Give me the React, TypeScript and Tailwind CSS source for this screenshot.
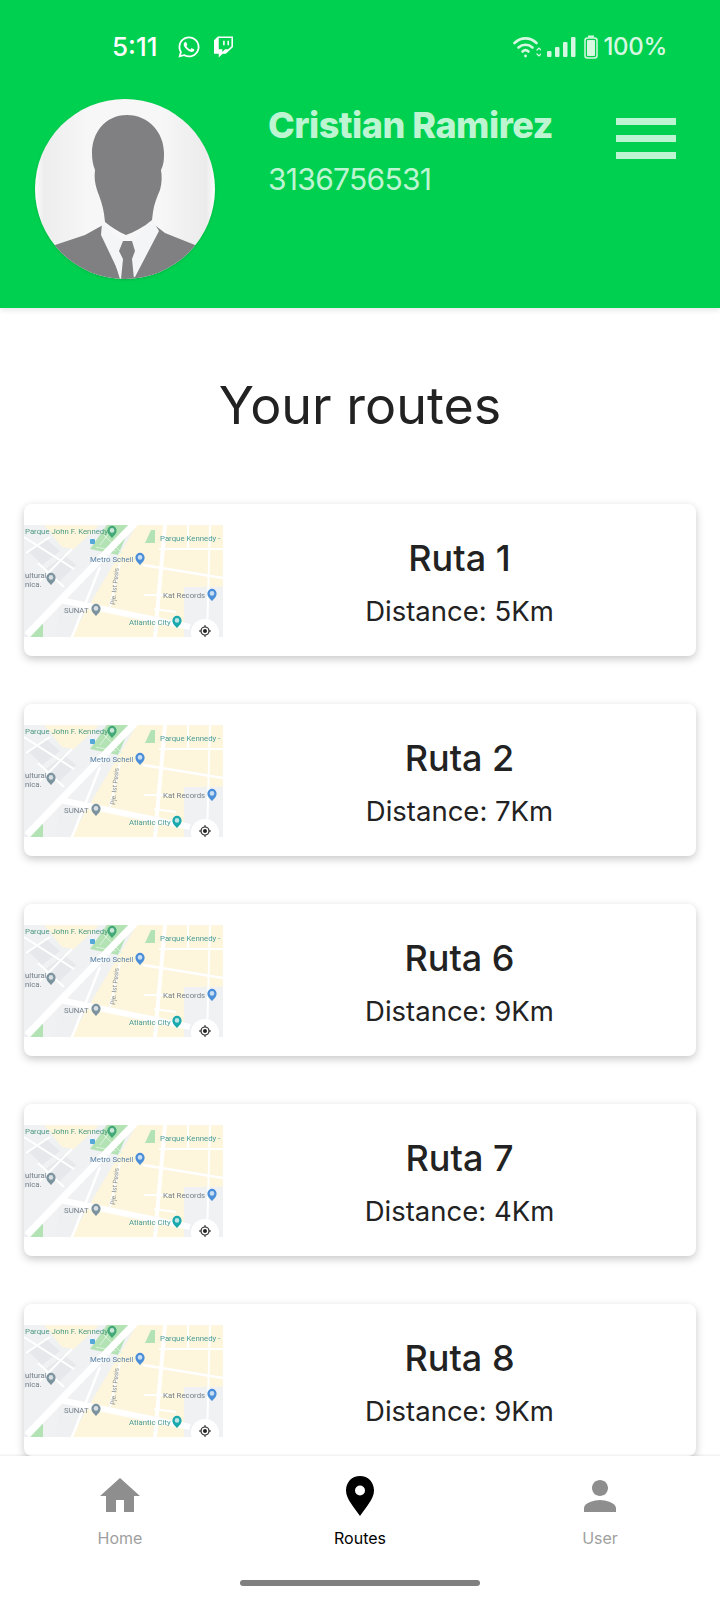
import { FaTwitch, FaWhatsapp } from "react-icons/fa";
import { MdHome, MdPerson } from "react-icons/md";

const routes = [
  { name: "Ruta 1", distance: "5Km" },
  { name: "Ruta 2", distance: "7Km" },
  { name: "Ruta 6", distance: "9Km" },
  { name: "Ruta 7", distance: "4Km" },
  { name: "Ruta 8", distance: "9Km" },
];

function MapPin({ x, y, color }: { x: number; y: number; color: string }) {
  return (
    <g transform={`translate(${x} ${y})`}>
      <path d="M0 7C-2 4.500-4.600 2.800-4.600-.6a4.600 4.600 0 0 1 9.200 0C4.600 2.800 2 4.500 0 7z" fill={color} />
      <circle cx="0" cy="-.6" r="2.300" fill="#fff" opacity=".7" />
    </g>
  );
}

function MapThumb() {
  return (
    <svg viewBox="0 0 199 112" className="mt-[2px] h-[112px] w-[199px] shrink-0 blur-[0.5px]">
      <rect width="199" height="112" fill="#f0f1f3" />
      {/* yellow blocks */}
      <path d="M46 112 113 0h86v62h-39v50z" fill="#fdf6dc" />
      <path d="M20 0h55L50 24 38 22z" fill="#fdf6dc" />
      <path d="M36 82 60 90 46 112H30z" fill="#eef0f2" />
      {/* grey blocks */}
      <path d="M4 26 22 14 36 26 18 40zM22 44 40 30 52 40 34 58zM0 46l8 8-8 10z" fill="#e6e8eb" />
      {/* park */}
      <path d="M66 24 94 30 107 0H83z" fill="#b3e2b4" />
      <path d="M72 22 92 26M80 10 98 28M88 4 76 20" stroke="#dcf2dc" strokeWidth="1" fill="none" />
      <path d="M121 18h10V5h-4z" fill="#b3e2b4" />
      <path d="M6 112h13V98z" fill="#b3e2b4" />
      {/* roads */}
      <g stroke="#fff" fill="none">
        <path d="M3 110 111-2" strokeWidth="7" />
        <path d="M141 0 131 112" strokeWidth="4" />
        <path d="M36 75 166 102" strokeWidth="6" />
        <path d="M119 40 199 53" strokeWidth="2.500" />
        <path d="M186 0 183 112" strokeWidth="2" />
        <path d="M135 24h64M164 0v24" strokeWidth="2" />
        <path d="M96 38 86 82" strokeWidth="2" />
        <path d="M76 42 48 112" strokeWidth="2.500" />
        <path d="M0 12 50 44M14 38 40 62M26 12 2 28M48 24 16 56M120 70h24M130 84l22 3" strokeWidth="2" />
      </g>
      {/* labels */}
      <g fontFamily="Roboto, sans-serif" fontSize="7.800">
        <text x="1" y="8.500" fill="#4e9a84">Parque John F. Kennedy</text>
        <text x="136" y="16" fill="#4a9c9a">Parque Kennedy -</text>
        <text x="66" y="37" fill="#5a84a8">Metro Schell</text>
        <text x="1" y="53" fill="#74808a">ultural</text>
        <text x="1" y="62" fill="#74808a">nica.</text>
        <text x="139" y="73" fill="#74808a">Kat Records</text>
        <text x="40" y="88" fill="#74808a">SUNAT</text>
        <text x="105" y="100" fill="#4a9c9a">Atlantic City</text>
        <text x="0" y="0" fill="#868e94" fontSize="6.500" transform="translate(91 80) rotate(-84)">Pje. Ist Pesis</text>
      </g>
      <MapPin x={88} y={6} color="#45a878" />
      <MapPin x={116} y={33} color="#4a8fd8" />
      <MapPin x={27} y={53} color="#7c939f" />
      <MapPin x={188} y={69} color="#4a8fd8" />
      <MapPin x={72} y={84} color="#7c939f" />
      <MapPin x={153} y={96} color="#1ba8ac" />
      <rect x="66" y="14" width="5" height="5" rx="1" fill="#55a9d8" />
      {/* my location button */}
      <circle cx="181" cy="108" r="14" fill="#fff" />
      <circle cx="181" cy="106" r="4" fill="none" stroke="#222" strokeWidth="1.200" />
      <circle cx="181" cy="106" r="2" fill="#222" />
      <path d="M181 100v2M181 110v2M175 106h2M185 106h2" stroke="#222" strokeWidth="1" />
    </svg>
  );
}

function Avatar() {
  return (
    <div className="h-[180px] w-[180px] shrink-0 overflow-hidden rounded-full shadow-sm">
      <svg viewBox="0 0 180 180" className="h-full w-full">
        <defs>
          <linearGradient id="wall" x1="0" x2="1" y1="0" y2="0">
            <stop offset="0" stopColor="#fdfdfd" />
            <stop offset=".05" stopColor="#ededed" />
            <stop offset=".3" stopColor="#f7f7f7" />
            <stop offset=".7" stopColor="#f7f7f7" />
            <stop offset=".95" stopColor="#ebebeb" />
            <stop offset="1" stopColor="#fdfdfd" />
          </linearGradient>
        </defs>
        <rect width="180" height="180" fill="url(#wall)" />
        {/* suit */}
        <path d="M20 146 50 136 68 126 85 180H98L117 124 130 134 160 146 170 180H10z" fill="#808083" />
        {/* shirt */}
        <path d="M67 124 92 146 118 122 124 132 100 178H86L66 136z" fill="#f4f5f6" />
        {/* tie */}
        <path d="M88 142h9l3 10-3 8 2 20H86l2-20-4-8z" fill="#808083" />
        {/* head */}
        <path d="M92 16C70 16 57 34 57 54c0 7 1 12 3 17-1 7 0 14 2 20 3 8 6 16 7 24l1 8c6 5 14 10 21 13 8-3 18-8 26-15l1-8c1-8 4-15 7-22 2-7 2-14 1-20 3-6 3-11 3-17 0-20-15-38-37-38z" fill="#808083" />
      </svg>
    </div>
  );
}

function StatusBar() {
  return (
    <div className="flex h-[24px] items-center justify-between pl-[112px] pr-[53px] text-white">
      <div className="flex items-center">
        <span className="w-[65px] text-[26px] font-medium leading-none">5:11</span>
        <FaWhatsapp className="h-[24px] w-[24px]" />
        <FaTwitch className="ml-[12px] h-[22px] w-[21px]" />
      </div>
      <div className="flex items-center text-[#d6f8e2]">
        <svg viewBox="0 0 28 24" className="h-[24px] w-[28px]" fill="none" stroke="currentColor" strokeWidth="2.600" strokeLinecap="round">
          <path d="M1.500 8C8 1.800 17 1.800 23.500 8" />
          <path d="M5.500 12.500C9.500 8.800 15.500 8.800 19.500 12.500" />
          <path d="M9.500 16.500c2-1.800 4-1.800 6 0" />
          <circle cx="12.500" cy="21" r="1.400" fill="currentColor" stroke="none" />
          <path d="M24 15l2-2 2 2M24 19l2 2 2-2" strokeWidth="1.200" />
        </svg>
        <svg viewBox="0 0 30 24" className="ml-[5px] h-[24px] w-[30px]" fill="currentColor">
          <rect x="1" y="16" width="4.500" height="6" rx="1" />
          <rect x="9" y="12" width="4.500" height="10" rx="1" />
          <rect x="17" y="7" width="4.500" height="15" rx="1" />
          <rect x="25" y="2" width="4.500" height="20" rx="1" />
        </svg>
        <svg viewBox="0 0 14 24" className="ml-[8px] h-[24px] w-[14px]" fill="none">
          <rect x="1" y="3" width="12" height="20" rx="2.500" stroke="currentColor" strokeWidth="1.500" />
          <rect x="4" y="0.500" width="6" height="2" fill="currentColor" />
          <rect x="3" y="5" width="8" height="16" rx="1" fill="currentColor" />
        </svg>
        <span className="ml-[5px] text-[24px] font-medium leading-none tracking-[-0.3px]">100%</span>
      </div>
    </div>
  );
}

function RouteCard({ name, distance }: { name: string; distance: string }) {
  return (
    <div className="flex h-[152px] shrink-0 items-center rounded-lg bg-white shadow-[0_3px_8px_rgba(0,0,0,0.22)]">
      <MapThumb />
      <div className="flex flex-1 flex-col items-center pt-[9px] text-[#222222]">
        <p className="text-[36px] font-medium leading-[44px]">{name}</p>
        <p className="mt-[9px] text-[27.500px] leading-[44px]">Distance: {distance}</p>
      </div>
    </div>
  );
}

export default function App() {
  return (
    <div className="flex h-[1600px] w-[720px] flex-col overflow-hidden bg-white font-['Inter',sans-serif]">
      {/* Header */}

      <header className="z-10 h-[308px] shrink-0 bg-[#00d04f] pt-[35px] shadow-[0_2px_6px_rgba(0,0,0,0.1)]">
        <StatusBar />

        <div className="mt-[40px] flex items-start pl-[35px] pr-[44px]">
          <Avatar />

          <div className="ml-[53px] flex-1 pt-[4px]">
            <h1 className="text-[36px] font-extrabold leading-[44px] tracking-[-0.5px] text-[#bdf5d2]">Cristian Ramirez</h1>
            <p className="mt-[12px] text-[30px] leading-[40px] tracking-[-0.7px] text-[#bdf5d2]">3136756531</p>
          </div>

          <div className="mt-[19px] flex w-[60px] flex-col gap-[10px]">
            <span className="h-[7px] bg-[#bdf5d2]" />
            <span className="h-[7px] bg-[#bdf5d2]" />
            <span className="h-[7px] bg-[#bdf5d2]" />
          </div>
        </div>
      </header>

      {/* Routes */}

      <main className="min-h-0 flex-1 overflow-hidden px-[24px] pt-[68px]">
        <h2 className="text-center text-[52px] leading-[60px] text-[#222222]">Your routes</h2>

        <div className="mt-[68px] flex flex-col gap-[48px]">
          {routes.map((route) => (
            <RouteCard key={route.name} {...route} />
          ))}
        </div>
      </main>

      {/* Bottom nav */}

      <nav className="z-10 flex h-[144px] shrink-0 flex-col bg-white pt-[16px] shadow-[0_-1px_2px_rgba(0,0,0,0.08)]">
        <div className="grid grid-cols-3">
          <div className="flex flex-col items-center text-[#8e8e8f]">
            <MdHome className="h-[48px] w-[48px]" />
            <span className="mt-[8px] text-[16px] leading-[20px] text-[#a0a0a0]">Home</span>
          </div>

          <div className="flex flex-col items-center text-black">
            <svg viewBox="0 0 28 40" className="mt-[4px] h-[40px] w-[28px]">
              <path fillRule="evenodd" d="M14 0C6 0 0 6 0 14.500 0 23 8 31 14 40c6-9 14-17 14-25.500C28 6 22 0 14 0zm0 9.500a5 5 0 1 1 0 10 5 5 0 0 1 0-10z" />
            </svg>
            <span className="mt-[12px] text-[16px] leading-[20px]">Routes</span>
          </div>

          <div className="flex flex-col items-center text-[#8e8e8f]">
            <MdPerson className="h-[48px] w-[48px]" />
            <span className="mt-[8px] text-[16px] leading-[20px] text-[#a0a0a0]">User</span>
          </div>
        </div>

        <div className="mx-auto mb-[14px] mt-auto h-[6px] w-[240px] rounded-full bg-[#808080]" />
      </nav>
    </div>
  );
}
